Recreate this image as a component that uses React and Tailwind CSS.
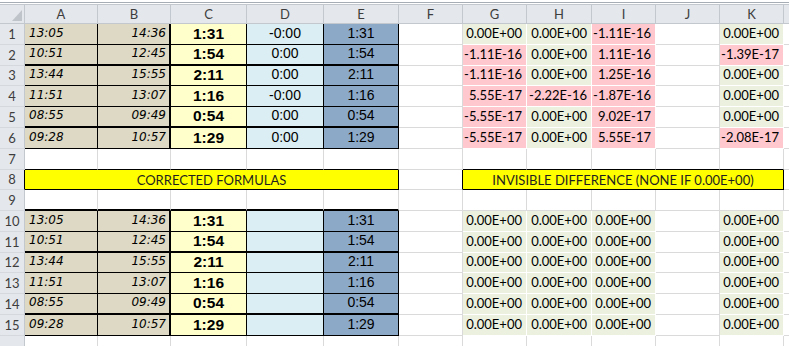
const GRID =
  "grid grid-rows-[minmax(0,1fr)] grid-cols-[25px_73px_73px_76px_77px_75px_64px_64px_65px_64px_64px_64px_1fr]";

const HEIGHTS = [
  "h-[21px]", "h-[21px]", "h-[20px]", "h-[21px]", "h-[21px]",
  "h-[21px]", "h-[21px]", "h-[20px]", "h-[21px]", "h-[21px]",
  "h-[21px]", "h-[20px]", "h-[21px]", "h-[21px]", "h-[21px]",
];

const STARTS = ["13:05", "10:51", "13:44", "11:51", "08:55", "09:28"];
const ENDS = ["14:36", "12:45", "15:55", "13:07", "09:49", "10:57"];
const DIFFS = ["1:31", "1:54", "2:11", "1:16", "0:54", "1:29"];
const CHECK = ["-0:00", "0:00", "0:00", "-0:00", "0:00", "0:00"];

const ZERO = "0.00E+00";
const ERRORS = [
  [ZERO, ZERO, "-1.11E-16", ZERO],
  ["-1.11E-16", ZERO, "1.11E-16", "-1.39E-17"],
  ["-1.11E-16", ZERO, "1.25E-16", ZERO],
  ["5.55E-17", "-2.22E-16", "-1.87E-16", ZERO],
  ["-5.55E-17", ZERO, "9.02E-17", ZERO],
  ["-5.55E-17", ZERO, "5.55E-17", "-2.08E-17"],
];
const CLEAN = [ZERO, ZERO, ZERO, ZERO];

const LETTERS = ["A", "B", "C", "D", "E", "F", "G", "H", "I", "J", "K", ""];

// rows whose bottom edge gets the heavy rule inside the data blocks
const THICK = [2, 5, 9, 11, 14];

const Cell = ({ className = "", children }) => (
  <div className={`flex min-h-0 items-end overflow-hidden whitespace-nowrap leading-none ${className}`}>
    {children}
  </div>
);

const RowNum = ({ n, className = "" }) => (
  <div
    className={`flex min-h-0 items-center justify-center overflow-hidden border-b border-r border-b-[#d5d9de] border-r-[#c3c8ce] bg-[#e4e7eb] font-['Lato'] text-[13px] leading-none text-[#3d3d3d] ${className}`}
  >
    {n}
  </div>
);

const HeaderRow = () => (
  <div className={`${GRID} h-[20px] border-y border-[#c3c8ce] bg-[#e4e7eb]`}>
    <div className="relative border-r border-[#c3c8ce]">
      <svg className="absolute bottom-[2px] right-[2px]" width="10" height="11" viewBox="0 0 10 11">
        <polygon points="10,0 10,11 0,11" fill="#bfc4ca" />
      </svg>
    </div>
    {LETTERS.map((letter, i) => (
      <div
        key={i}
        className={`flex items-center justify-center font-['Lato'] text-[13px] leading-none text-[#3d3d3d] ${
          i < 11 ? "border-r border-[#c3c8ce]" : ""
        }`}
      >
        {letter}
      </div>
    ))}
  </div>
);

const DataRow = ({ n, i, clean }) => {
  const thick = THICK.includes(n);
  const bottom = thick ? "border-b-2 border-b-black" : "border-b border-b-black";
  const errors = clean ? CLEAN : ERRORS[i];
  const shade = (value) => (value === ZERO ? "bg-[#ebf1de]" : "bg-[#ffc7ce]");
  const sci = "justify-end pr-[4px] pb-[4px] font-['Lato'] text-[13px] text-black border-r border-b border-white";

  return (
    <div className={`${GRID} ${HEIGHTS[n - 1]}`}>
      <RowNum n={n} />
      <Cell className={`${bottom} border-r border-r-black bg-[#ddd9c4] pl-[4px] pb-[5px] font-['DejaVu_Sans'] text-[12px] italic`}>
        {STARTS[i]}
      </Cell>
      <Cell className={`${bottom} border-r-2 border-r-black bg-[#ddd9c4] justify-end pr-[3px] pb-[5px] font-['DejaVu_Sans'] text-[12px] italic`}>
        {ENDS[i]}
      </Cell>
      <Cell className={`${bottom} border-r border-r-black bg-[#ffffcc] justify-center pb-[3px] font-['Liberation_Sans'] text-[15.5px] font-bold`}>
        {DIFFS[i]}
      </Cell>
      <Cell className={`${bottom} border-r border-r-black bg-[#daeef3] justify-center pb-[4px] font-['Liberation_Sans'] text-[14px]`}>
        {clean ? "" : CHECK[i]}
      </Cell>
      <Cell className={`${bottom} border-r border-r-black bg-[#8da9c8] justify-center pb-[4px] font-['Liberation_Sans'] text-[14px]`}>
        {DIFFS[i]}
      </Cell>
      <Cell className="border-r border-b border-[#dadada]" />
      <Cell className={`${sci} ${shade(errors[0])}`}>{errors[0]}</Cell>
      <Cell className={`${sci} ${shade(errors[1])}`}>{errors[1]}</Cell>
      <Cell className={`${sci} ${shade(errors[2])}`}>{errors[2]}</Cell>
      <Cell className="border-r border-b border-[#dadada]" />
      <Cell className={`${sci} ${shade(errors[3])}`}>{errors[3]}</Cell>
      <Cell className="border-b border-[#dadada]" />
    </div>
  );
};

const BlankRow = ({ n, blackBottom = false, topOfBlock = false }) => {
  const plain = "border-r border-b border-[#dadada]";
  let dataCol = plain;
  let sideCol = plain;
  if (blackBottom) {
    dataCol = "border-r border-b border-r-[#dadada] border-b-black";
    sideCol = dataCol;
  }
  if (topOfBlock) {
    dataCol = "border-r border-b-2 border-r-[#dadada] border-b-black";
  }

  return (
    <div className={`${GRID} ${HEIGHTS[n - 1]}`}>
      <RowNum n={n} />
      {[0, 1, 2, 3, 4].map((c) => (
        <Cell key={c} className={dataCol} />
      ))}
      <Cell className={plain} />
      {[0, 1, 2, 3, 4].map((c) => (
        <Cell key={c} className={sideCol} />
      ))}
      <Cell className="border-b border-[#dadada]" />
    </div>
  );
};

const BannerRow = ({ n }) => (
  <div className={`${GRID} ${HEIGHTS[n - 1]}`}>
    <RowNum n={n} className="border-r-black" />
    <div className="col-span-5 flex items-center justify-center border-r border-b border-black bg-[#ffff00] pt-[1px] font-['Lato'] text-[13px] leading-none text-[#1f1f1f]">
      CORRECTED FORMULAS
    </div>
    <div className="border-r border-b border-r-black border-b-[#dadada]" />
    <div className="col-span-5 flex items-center justify-center border-r border-b border-black bg-[#ffff00] pt-[1px] font-['Lato'] text-[13px] leading-none text-[#1f1f1f]">
      INVISIBLE DIFFERENCE (NONE IF 0.00E+00)
    </div>
    <div className="border-b border-[#dadada]" />
  </div>
);

export default function App() {
  return (
    <div className="h-[347px] w-[789px] overflow-hidden bg-white">
      <div className="h-[2px]" />
      <div className="h-[1px] bg-[#a7adb5]" />
      <div className="h-[1px]" />
      <HeaderRow />
      {STARTS.map((_, i) => (
        <DataRow key={i} n={i + 1} i={i} />
      ))}
      <BlankRow n={7} blackBottom />
      <BannerRow n={8} />
      <BlankRow n={9} topOfBlock />
      {STARTS.map((_, i) => (
        <DataRow key={i} n={i + 10} i={i} clean />
      ))}
      <div className={`${GRID} h-[10px]`}>
        <div className="border-r border-[#c3c8ce] bg-[#e4e7eb]" />
        {LETTERS.map((_, i) => (
          <div key={i} className={i < 11 ? "border-r border-[#dadada]" : ""} />
        ))}
      </div>
    </div>
  );
}
